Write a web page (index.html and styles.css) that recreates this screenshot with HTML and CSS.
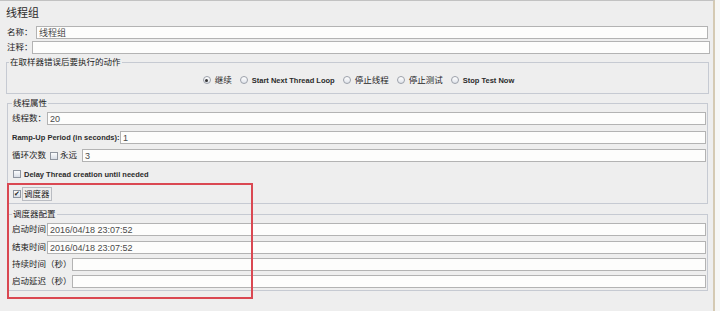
FILE: index.html
```html
<!DOCTYPE html>
<html lang="zh-CN">
<head>
    <meta charset="UTF-8">
    <meta name="viewport" content="width=device-width, initial-scale=1.0">
    <title>线程组</title>
    <link rel="stylesheet" href="styles.css">
</head>
<body>
    <div class="page">
        <h1 class="title">线程组</h1>

        <div class="row name-row">
            <label class="lbl w-name">名称：</label>
            <input class="field" type="text" value="线程组">
        </div>
        <div class="row comment-row">
            <label class="lbl w-comment">注释：</label>
            <input class="field" type="text" value="">
        </div>

        <fieldset class="box box-error">
            <legend>在取样器错误后要执行的动作</legend>
            <div class="radios">
                <span class="opt"><i class="radio on"></i>继续</span>
                <span class="opt en"><i class="radio"></i>Start Next Thread Loop</span>
                <span class="opt"><i class="radio"></i>停止线程</span>
                <span class="opt"><i class="radio"></i>停止测试</span>
                <span class="opt en"><i class="radio"></i>Stop Test Now</span>
            </div>
        </fieldset>

        <fieldset class="box box-thread">
            <legend>线程属性</legend>
            <div class="row r-threads">
                <label class="lbl w-35">线程数：</label>
                <input class="field" type="text" value="20">
            </div>
            <div class="row r-ramp">
                <label class="lbl en w-ramp">Ramp-Up Period (in seconds):</label>
                <input class="field" type="text" value="1">
            </div>
            <div class="row r-loop">
                <label class="lbl w-loop">循环次数</label>
                <span class="check"></span>
                <span class="lbl w-forever">永远</span>
                <input class="field" type="text" value="3">
            </div>
            <div class="row r-delay">
                <span class="check"></span>
                <span class="lbl en">Delay Thread creation until needed</span>
            </div>
            <div class="row r-sched">
                <span class="check on">&#10004;</span>
                <span class="lbl focus">调度器</span>
            </div>
        </fieldset>

        <fieldset class="box box-sched">
            <legend>调度器配置</legend>
            <div class="row r-start">
                <label class="lbl w-35">启动时间</label>
                <input class="field" type="text" value="2016/04/18 23:07:52">
            </div>
            <div class="row r-end">
                <label class="lbl w-35">结束时间</label>
                <input class="field" type="text" value="2016/04/18 23:07:52">
            </div>
            <div class="row r-dur">
                <label class="lbl w-60">持续时间（秒）</label>
                <input class="field" type="text" value="">
            </div>
            <div class="row r-wait">
                <label class="lbl w-60">启动延迟（秒）</label>
                <input class="field" type="text" value="">
            </div>
        </fieldset>

        <div class="mark"></div>
    </div>
</body>
</html>
```

FILE: styles.css
```css
body {
    margin: 0;
    background-color: #f7f7f5;
    font-family: "Liberation Sans", "Noto Sans CJK SC", sans-serif;
    color: #1e1e1e;
}
.page {
    position: relative;
    box-sizing: border-box;
    width: 715px;
    height: 311px;
    padding-left: 6px;
    background-color: #eeeeee;
    border-top: 1px solid #c2c2c2;
    border-right: 2px solid #d5cab3;
}
.title {
    margin: 0;
    height: 25px;
    line-height: 25px;
    font-size: 11px;
    font-weight: normal;
    color: #2a2a2a;
}

/* rows */
.row {
    display: flex;
    align-items: center;
    height: 13px;
}
.lbl {
    flex: none;
    font-size: 8.5px;
    line-height: 11px;
    white-space: nowrap;
    color: #1c1c1c;
}
.en {
    font-size: 7.5px;
    font-weight: bold;
    color: #2b2b2b;
}
.field {
    flex: 1;
    min-width: 0;
    box-sizing: border-box;
    height: 13px;
    margin: 0;
    padding: 0 2px;
    border: 1px solid #b3b3b3;
    background-color: #fdfdfc;
    font-family: "Liberation Sans", "Noto Sans CJK SC", sans-serif;
    font-size: 9px;
    color: #4a4a4a;
    outline: none;
}

.name-row {
    margin: 0 5px 0 1px;
}
.comment-row {
    margin: 2px 3px 0 1px;
}
.w-name { width: 29px; }
.w-comment { width: 25px; }
.w-35 { width: 35px; }
.w-60 { width: 60px; }
.w-ramp { width: 108px; }
.w-loop { width: 38px; }
.w-forever { width: 22px; margin-left: 2px; }

/* group boxes */
.box {
    margin: 0;
    padding: 0;
    border: 1px solid #c6cad2;
    min-width: 0;
}
.box legend {
    padding: 0 1px;
    font-size: 8.5px;
    line-height: 10px;
    color: #222;
}
.box-error {
    margin: 3px 4px 0 0;
}
.box-error legend {
    margin-left: 2px;
}
.box-thread {
    margin: 4px 5px 0 1px;
    padding: 0 1px 2px 4px;
}
.box-sched {
    margin: 5px 5px 0 2px;
    padding: 0 1px 2px 3px;
}

/* radio buttons */
.radios {
    display: flex;
    justify-content: center;
    align-items: center;
    gap: 8px;
    height: 26px;
    padding-left: 2px;
}
.opt {
    display: flex;
    align-items: center;
    gap: 4px;
    font-size: 8.5px;
    line-height: 11px;
    white-space: nowrap;
}
.opt.en {
    font-size: 7.5px;
}
.radio {
    position: relative;
    box-sizing: border-box;
    width: 8px;
    height: 8px;
    border: 1px solid #9ca1aa;
    border-radius: 50%;
    background: linear-gradient(#ffffff, #dfe3ea);
}
.radio.on::after {
    content: "";
    position: absolute;
    left: 1.5px;
    top: 1.5px;
    width: 3px;
    height: 3px;
    border-radius: 50%;
    background-color: #333;
}

/* checkboxes */
.check {
    flex: none;
    box-sizing: border-box;
    width: 8px;
    height: 8px;
    border: 1px solid #8f959f;
    background: linear-gradient(#fbfcfd, #d9dee6);
    font-size: 7px;
    line-height: 6px;
    text-align: center;
    color: #222;
}

.r-threads { margin-top: 4px; }
.r-ramp { margin-top: 6px; }
.r-loop { margin-top: 5px; }
.r-loop .check { margin-left: 0; }
.r-delay {
    margin-top: 6px;
    height: 12px;
    gap: 3px;
    padding-left: 1px;
}
.r-sched {
    margin-top: 7px;
    height: 14px;
    gap: 1px;
    padding-left: 1px;
}
.focus {
    border: 1px solid #b9bcc2;
    padding: 0 1px;
    line-height: 12px;
}

.r-start { margin-top: 4px; }
.r-end { margin-top: 5px; }
.r-dur { margin-top: 4px; }
.r-wait { margin-top: 4px; }

/* red highlight drawn over the scheduler area */
.mark {
    position: absolute;
    left: 7px;
    top: 182px;
    width: 246px;
    height: 116px;
    box-sizing: border-box;
    border: 2px solid #da4852;
}
```
